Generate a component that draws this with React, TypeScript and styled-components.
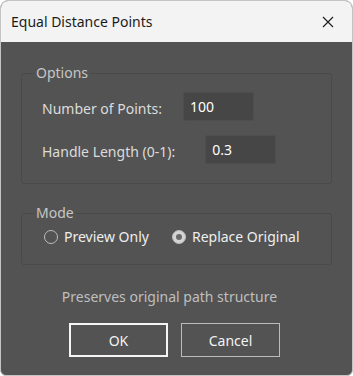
import React from "react";
import styled, { createGlobalStyle } from "styled-components";

const Global = createGlobalStyle`
  html, body { margin: 0; padding: 0; background: #ffffff; }
  body { font-family: "Segoe UI", "Noto Sans", "Open Sans", sans-serif; }
`;

const Window = styled.div`
  width: 353px;
  height: 376px;
  box-sizing: border-box;
  border: 1px solid #c4c4c4;
  border-radius: 8px 8px 6px 6px;
  overflow: hidden;
  display: flex;
  flex-direction: column;
  background: #535353;
`;

const TitleBar = styled.div`
  height: 41px;
  flex: none;
  background: #f3f3f3;
  display: flex;
  align-items: center;
  justify-content: space-between;
  padding: 0 12px 0 10px;
  font-size: 14px;
  color: #1b1b1b;
`;

const Close = styled.button`
  border: none;
  background: transparent;
  width: 24px;
  height: 24px;
  padding: 0;
  display: flex;
  align-items: center;
  justify-content: center;
`;

const Body = styled.div`
  flex: 1;
  display: flex;
  flex-direction: column;
  padding: 21px 20px 0 20px;
`;

const Group = styled.fieldset<{ $gap: number; $pb: number; $pt: number }>`
  margin: 0;
  border: 1px solid #4a4a4a;
  border-radius: 3px;
  padding: ${(p) => p.$pt}px 20px ${(p) => p.$pb}px 20px;
  display: flex;
  flex-direction: column;
  gap: ${(p) => p.$gap}px;
  & + & { margin-top: 19px; }
`;

const Legend = styled.legend`
  margin-left: -8px;
  padding: 0 2px;
  font-size: 14px;
  color: #c6c6c6;
  line-height: 20px;
`;

const Row = styled.div<{ $gap: number }>`
  display: flex;
  align-items: center;
  gap: ${(p) => p.$gap}px;
`;

const Label = styled.label`
  font-size: 14px;
  color: #dcdcdc;
  padding-top: 4px;
`;

const Input = styled.input`
  width: 71px;
  height: 29px;
  box-sizing: border-box;
  background: #464646;
  border: 1px solid #4e4e4e;
  border-radius: 2px;
  color: #ffffff;
  font-family: inherit;
  font-size: 14px;
  padding: 0 6px;
  outline: none;
`;

const RadioRow = styled.div`
  display: flex;
  align-items: center;
  gap: 23px;
  margin-left: 2px;
`;

const RadioOption = styled.label`
  display: flex;
  align-items: center;
  gap: 6px;
  font-size: 14px;
  color: #eeeeee;
`;

const RadioDot = styled.span<{ $checked?: boolean }>`
  width: 14px;
  height: 14px;
  box-sizing: border-box;
  border-radius: 50%;
  border: 1px solid #bdbdbd;
  background: ${(p) => (p.$checked ? "#d4d4d4" : "transparent")};
  display: flex;
  align-items: center;
  justify-content: center;
  &::after {
    content: "";
    display: ${(p) => (p.$checked ? "block" : "none")};
    width: 6px;
    height: 6px;
    border-radius: 50%;
    background: #6a6a6a;
  }
`;

const Note = styled.div`
  margin-top: 22px;
  padding-right: 14px;
  text-align: center;
  font-size: 14px;
  color: #bfbfbf;
`;

const Buttons = styled.div`
  margin-top: 17px;
  display: flex;
  justify-content: center;
  gap: 13px;
  padding-right: 4px;
`;

const Button = styled.button<{ $primary?: boolean }>`
  width: 99px;
  height: 34px;
  box-sizing: border-box;
  background: #535353;
  color: #f2f2f2;
  font-family: inherit;
  font-size: 14px;
  border: ${(p) => (p.$primary ? "2px solid #f5f5f5" : "1px solid #bcbcbc")};
  border-radius: 0;
`;

export default function App() {
  return (
    <>
      <Global />
      <Window>
        <TitleBar>
          <span>Equal Distance Points</span>
          <Close aria-label="Close">
            <svg width="12" height="12" viewBox="0 0 12 12">
              <path d="M1 1 L11 11 M11 1 L1 11" stroke="#1b1b1b" strokeWidth="1.1" />
            </svg>
          </Close>
        </TitleBar>
        <Body>
          <Group $gap={14} $pb={19} $pt={9}>
            <Legend>Options</Legend>
            <Row $gap={21}>
              <Label>Number of Points:</Label>
              <Input defaultValue="100" />
            </Row>
            <Row $gap={30}>
              <Label>Handle Length (0-1):</Label>
              <Input defaultValue="0.3" />
            </Row>
          </Group>
          <Group $gap={0} $pb={18} $pt={4}>
            <Legend>Mode</Legend>
            <RadioRow>
              <RadioOption>
                <RadioDot />
                Preview Only
              </RadioOption>
              <RadioOption>
                <RadioDot $checked />
                Replace Original
              </RadioOption>
            </RadioRow>
          </Group>
          <Note>Preserves original path structure</Note>
          <Buttons>
            <Button $primary>OK</Button>
            <Button>Cancel</Button>
          </Buttons>
        </Body>
      </Window>
    </>
  );
}
